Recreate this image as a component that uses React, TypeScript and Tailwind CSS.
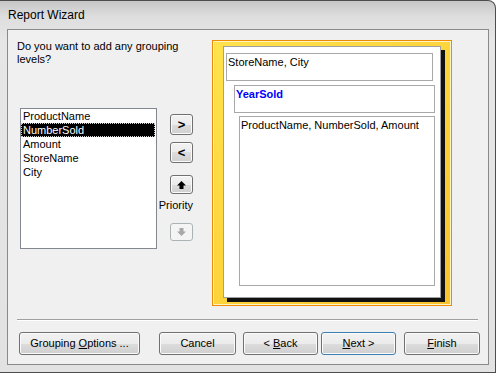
import React from 'react'

const font = { fontFamily: '"Liberation Sans", Arial, sans-serif' }

const btnBase =
  'flex items-center justify-center rounded-[3px] border text-[11px] text-black shadow-[inset_0_0_0_1px_#fbfbfb] bg-[linear-gradient(to_bottom,#f2f2f2_0%,#ebebeb_50%,#dddddd_50%,#cfcfcf_100%)]'

function UpArrow({ color }: { color: string }) {
  return (
    <svg width="9" height="8" viewBox="0 0 9 8">
      <polygon points="4.5,0 9,4.5 6.5,4.5 6.5,8 2.5,8 2.5,4.5 0,4.5" fill={color} />
    </svg>
  )
}

function DownArrow({ color }: { color: string }) {
  return (
    <svg width="9" height="8" viewBox="0 0 9 8">
      <polygon points="4.5,8 9,3.5 6.5,3.5 6.5,0 2.5,0 2.5,3.5 0,3.5" fill={color} />
    </svg>
  )
}

export default function App() {
  const fields = ['ProductName', 'NumberSold', 'Amount', 'StoreName', 'City']

  return (
    <div
      className="w-[496px] h-[373px] flex flex-col overflow-hidden rounded-tr-[8px] border-t border-r border-b border-[#4d4d4d] bg-[linear-gradient(to_bottom,#c6c6c6_0px,#dedede_16px,#e6e6e6_40px,#e2e2e2_100%)]"
      style={font}
    >
      {/* Title bar */}
      <div className="h-[28px] flex items-center pl-[8px] text-[12px] text-black">Report Wizard</div>

      {/* Frame + client area */}
      <div className="pl-[7px] pr-[6px]">
        <div className="w-[482px] h-[336px] border border-[#8a8a8a] bg-[#f0f0f0] flex flex-col">
          {/* Top section */}
          <div className="flex">
            {/* Left column */}
            <div className="w-[204px] flex flex-col">
              <p className="ml-[9px] mt-[10px] text-[11px] leading-[13px] text-black">
                Do you want to add any grouping
                <br />
                levels?
              </p>

              <div className="flex mt-[42px] ml-[12px]">
                {/* Field list */}
                <div className="w-[137px] h-[141px] border border-[#828790] bg-white flex flex-col">
                  {fields.map((f) =>
                    f === 'NumberSold' ? (
                      <div
                        key={f}
                        className="h-[14px] mr-[1px] flex items-center pl-[1px] bg-black text-white text-[11px] border border-dotted border-[#d0d0d0]"
                      >
                        {f}
                      </div>
                    ) : (
                      <div key={f} className="h-[14px] flex items-center pl-[2px] text-[11px] text-black">
                        {f}
                      </div>
                    )
                  )}
                </div>

                {/* Move buttons */}
                <div className="ml-[13px] mt-[6px] w-[23px] flex flex-col items-end">
                  <div className={`${btnBase} w-[23px] h-[21px] border-[#707070] text-[13px] font-bold`}>&gt;</div>
                  <div className={`${btnBase} w-[23px] h-[21px] mt-[7px] border-[#707070] text-[13px] font-bold`}>&lt;</div>
                  <div className={`${btnBase} w-[23px] h-[19px] mt-[12px] border-[#707070]`}>
                    <UpArrow color="#000" />
                  </div>
                  <div className="mt-[5px] text-[11px] leading-[13px] text-black whitespace-nowrap">Priority</div>
                  <div className="mt-[11px] w-[23px] h-[18px] flex items-center justify-center rounded-[3px] border border-[#adb2b5] bg-[#f4f4f4]">
                    <DownArrow color="#a8a8a8" />
                  </div>
                </div>
              </div>
            </div>

            {/* Report preview */}
            <div className="mt-[10px] w-[240px] h-[266px] border border-[#f08a00]">
              <div className="w-full h-full border border-[#fff4c4] bg-[linear-gradient(135deg,#ffe24c_0%,#fdd43c_50%,#f9c22e_100%)] pt-[4px] pl-[9px]">
                <div className="w-[218px] h-[252px] border border-[#a0a0a0] bg-white shadow-[4px_4px_0_#111] flex flex-col">
                  <div className="ml-[2px] mt-[6px] w-[207px] h-[28px] border border-[#a8a8a8] pl-[1px] pt-[2px] text-[11px] leading-[13px] text-black">
                    StoreName, City
                  </div>
                  <div className="ml-[10px] mt-[4px] w-[201px] h-[28px] border border-[#a8a8a8] pl-[1px] pt-[2px] text-[11px] leading-[13px] font-bold text-[#0000ff]">
                    YearSold
                  </div>
                  <div className="ml-[15px] mt-[3px] w-[196px] h-[170px] border border-[#a8a8a8] pl-[1px] pt-[2px] text-[11px] leading-[13px] text-black">
                    ProductName, NumberSold, Amount
                  </div>
                </div>
              </div>
            </div>
          </div>

          {/* Separator */}
          <div className="mt-[13px] ml-[9px] mr-[10px] border-t border-[#a0a0a0] border-b border-b-white" />

          {/* Bottom buttons */}
          <div className="mt-[11px] ml-[11px] flex">
            <div className={`${btnBase} h-[23px] w-[121px] border-[#707070]`}>
              Grouping&nbsp;<span className="underline">O</span>ptions ...
            </div>
            <div className={`${btnBase} h-[23px] w-[77px] ml-[19px] border-[#707070]`}>Cancel</div>
            <div className={`${btnBase} h-[23px] w-[75px] ml-[7px] border-[#707070]`}>
              &lt;&nbsp;<span className="underline">B</span>ack
            </div>
            <div
              className={`${btnBase} h-[23px] w-[75px] ml-[3px] border-[#3c7fb1] shadow-[inset_0_0_0_1px_#9fe0fb]`}
            >
              <span className="underline">N</span>ext&nbsp;&gt;
            </div>
            <div className={`${btnBase} h-[23px] w-[76px] ml-[8px] border-[#707070]`}>
              <span className="underline">F</span>inish
            </div>
          </div>
        </div>
      </div>
    </div>
  )
}
